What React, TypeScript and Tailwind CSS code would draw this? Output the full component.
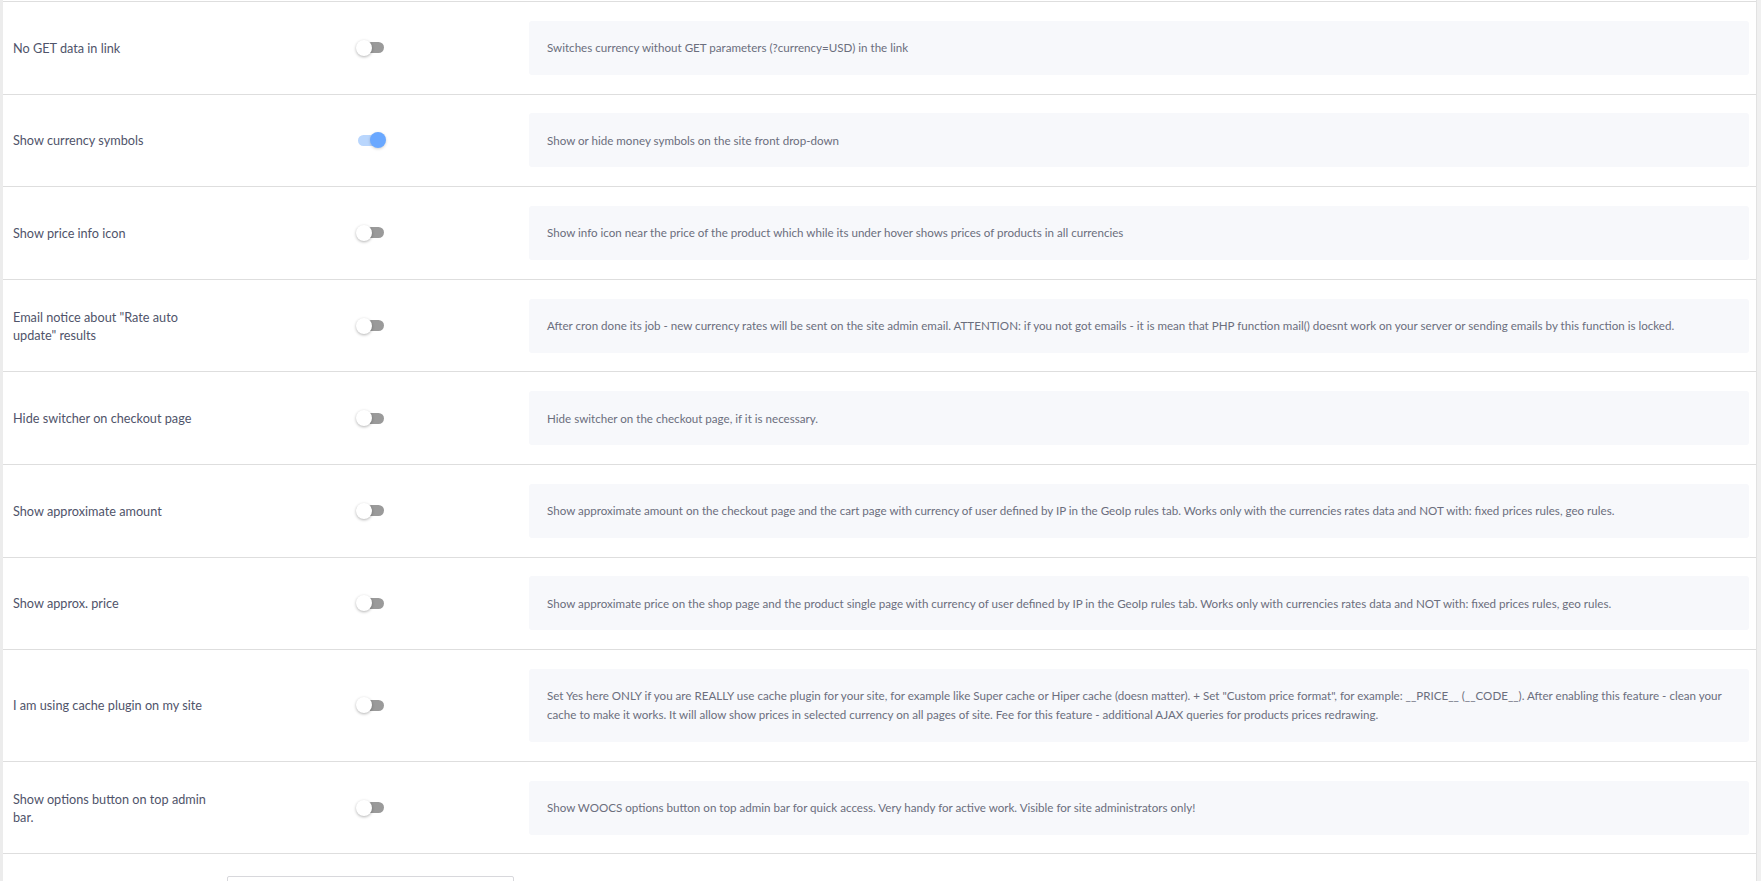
const rows = [
  {
    id: "no_get",
    label: "No GET data in link",
    on: false,
    desc: "Switches currency without GET parameters (?currency=USD) in the link",
  },
  {
    id: "symbols",
    label: "Show currency symbols",
    on: true,
    desc: "Show or hide money symbols on the site front drop-down",
  },
  {
    id: "info_icon",
    label: "Show price info icon",
    on: false,
    desc: "Show info icon near the price of the product which while its under hover shows prices of products in all currencies",
  },
  {
    id: "email",
    label: 'Email notice about "Rate auto update" results',
    on: false,
    desc: "After cron done its job - new currency rates will be sent on the site admin email. ATTENTION: if you not got emails - it is mean that PHP function mail() doesnt work on your server or sending emails by this function is locked.",
  },
  {
    id: "checkout",
    label: "Hide switcher on checkout page",
    on: false,
    desc: "Hide switcher on the checkout page, if it is necessary.",
  },
  {
    id: "approx_amount",
    label: "Show approximate amount",
    on: false,
    desc: "Show approximate amount on the checkout page and the cart page with currency of user defined by IP in the GeoIp rules tab. Works only with the currencies rates data and NOT with: fixed prices rules, geo rules.",
  },
  {
    id: "approx_price",
    label: "Show approx. price",
    on: false,
    desc: "Show approximate price on the shop page and the product single page with currency of user defined by IP in the GeoIp rules tab. Works only with currencies rates data and NOT with: fixed prices rules, geo rules.",
  },
  {
    id: "cache",
    label: "I am using cache plugin on my site",
    on: false,
    desc: 'Set Yes here ONLY if you are REALLY use cache plugin for your site, for example like Super cache or Hiper cache (doesn matter). + Set "Custom price format", for example: __PRICE__ (__CODE__). After enabling this feature - clean your cache to make it works. It will allow show prices in selected currency on all pages of site. Fee for this feature - additional AJAX queries for products prices redrawing.',
  },
  {
    id: "admin_bar",
    label: "Show options button on top admin bar.",
    on: false,
    desc: "Show WOOCS options button on top admin bar for quick access. Very handy for active work. Visible for site administrators only!",
  },
];

const Toggle = ({ on }: { on: boolean }) => {
  return (
    <div className="relative w-[26px] h-[11px]">
      <div
        className={
          on
            ? "w-full h-full rounded-full bg-[#b9d6fd]"
            : "w-full h-full rounded-full bg-[#9a9a9a]"
        }
      ></div>
      {on ? (
        <div className="absolute -right-[2px] -top-[2.5px] w-4 h-4 rounded-full bg-[#6aa8ff] shadow-[0_1px_3px_rgba(0,0,0,0.18)]"></div>
      ) : (
        <div className="absolute -left-[2px] -top-[2.5px] w-4 h-4 rounded-full bg-white shadow-[0_1px_3px_rgba(0,0,0,0.3)]"></div>
      )}
    </div>
  );
};

export default function App() {
  return (
    <div className="flex h-[881px] overflow-hidden bg-white font-['Lato','Noto_Sans',sans-serif]">
      <div className="w-[3px] shrink-0 bg-[#ececec]"></div>
      <div className="flex-1 pt-px">
        {rows.map((row) => (
          <div
            key={row.id}
            className="flex items-center border-t border-[#dedede] py-[18.8px]"
          >
            <div className="w-[224px] shrink-0 pl-[10px] pr-[12px] text-[12.7px] leading-[18px] text-[#50546a]">
              {row.label}
            </div>
            <div className="w-[287px] shrink-0 flex justify-center">
              <Toggle on={row.on} />
            </div>
            <div className="flex-1 pl-[15px] pr-[7px]">
              <div className="rounded-[3px] bg-[#f7f8fb] px-[18px] py-[17.5px] text-[11.6px] leading-[19px] text-[#6b6e7d]">
                {row.desc}
              </div>
            </div>
          </div>
        ))}
        <div className="flex items-start border-t border-[#dedede] pt-[22px]">
          <div className="w-[224px] shrink-0"></div>
          <div className="w-[287px] shrink-0">
            <input
              type="text"
              className="w-full h-[38px] border border-[#d8d8dc] rounded-[2px] bg-white px-2 text-[13px]"
            />
          </div>
          <div className="flex-1 pl-[15px] pr-[7px] pt-[5px]">
            <div className="h-[54px] rounded-[3px] bg-[#f7f8fb]"></div>
          </div>
        </div>
      </div>
      <div className="w-[5px] shrink-0 border-l border-[#e2e2e2] bg-[#f0f0f0]"></div>
    </div>
  );
}
